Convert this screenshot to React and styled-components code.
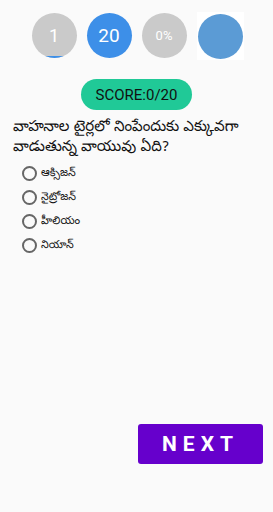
import React from 'react';
import styled, { createGlobalStyle } from 'styled-components';

const Global = createGlobalStyle`
  body {
    margin: 0;
    background: #fafafa;
    font-family: Roboto, "Noto Sans", sans-serif;
  }
`

const Page = styled.div`
  width: 273px;
  height: 512px;
  display: flex;
  flex-direction: column;
  box-sizing: border-box;
  padding: 13px 0 0;
`

const Stats = styled.div`
  display: flex;
  justify-content: center;
  gap: 10px;
  padding-left: 2px;
`

const Circle = styled.div`
  width: 45px;
  height: 45px;
  border-radius: 50%;
  background: ${p => p.bg};
  color: #fff;
  display: flex;
  align-items: center;
  justify-content: center;
  font-size: ${p => p.size}px;
  position: relative;
  overflow: hidden;
`

const Arc = styled.div`
  position: absolute;
  left: 0;
  right: 0;
  bottom: 0;
  height: 2px;
  background: #3d8fe8;
`

const Framed = styled.div`
  width: 47px;
  height: 48px;
  margin-top: -1px;
  background: #fff;
  display: flex;
  align-items: center;
  justify-content: center;
`

const Score = styled.div`
  align-self: center;
  margin-top: 19px;
  width: 111px;
  height: 31px;
  border-radius: 16px;
  background: #20c997;
  color: #111;
  font-size: 15px;
  display: flex;
  align-items: center;
  justify-content: center;
`

const Question = styled.div`
  margin: 8px 10px 0 13px;
  font-size: 15px;
  line-height: 20px;
  color: #111;
  font-family: "Noto Sans Telugu", "Noto Sans", sans-serif;
`

const Options = styled.div`
  display: flex;
  flex-direction: column;
  gap: 8px;
  margin: 7px 0 0 22px;
`

const Option = styled.label`
  display: flex;
  align-items: center;
  gap: 4px;
  font-size: 11px;
  color: #111;
  height: 16px;
  font-family: "Noto Sans Telugu", "Noto Sans", sans-serif;
`

const Radio = styled.span`
  width: 11px;
  height: 11px;
  border: 2px solid #666;
  border-radius: 50%;
`

const Footer = styled.div`
  margin-top: auto;
  display: flex;
  justify-content: flex-end;
  padding: 0 10px 48px 0;
`

const Next = styled.button`
  width: 125px;
  height: 40px;
  border: none;
  border-radius: 3px;
  background: #6600cc;
  color: #fff;
  font-family: Roboto, sans-serif;
  font-weight: 700;
  font-size: 21px;
  letter-spacing: 6px;
  padding-left: 6px;
`

const options = ['ఆక్సిజన్', 'నైట్రోజన్', 'హీలియం', 'నియాన్']

export default function App() {
  return (
    <Page>
      <Global />
      <Stats>
        <Circle bg="#cacaca" size={18}>1<Arc /></Circle>
        <Circle bg="#3d8fe8" size={19}>20</Circle>
        <Circle bg="#cacaca" size={13}>0%</Circle>
        <Framed><Circle bg="#5b9bd5" /></Framed>
      </Stats>
      <Score>SCORE:0/20</Score>
      <Question>వాహనాల టైర్లలో నింపేందుకు ఎక్కువగా వాడుతున్న వాయువు ఏది?</Question>
      <Options>
        {options.map(o => (
          <Option key={o}><Radio />{o}</Option>
        ))}
      </Options>
      <Footer>
        <Next>NEXT</Next>
      </Footer>
    </Page>
  )
}
